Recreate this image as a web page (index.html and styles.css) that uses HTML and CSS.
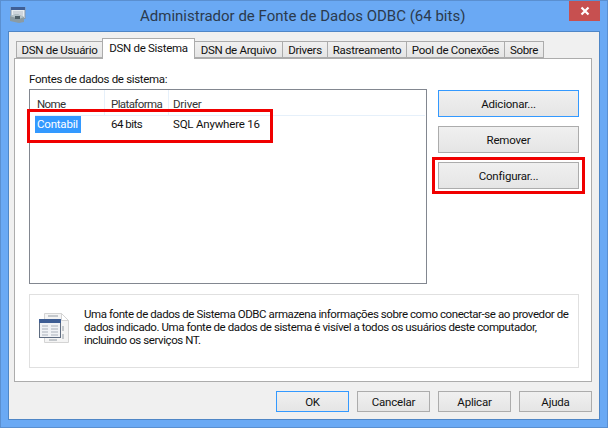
FILE: index.html
```html
<!DOCTYPE html>
<html lang="pt">
<head>
    <meta charset="UTF-8">
    <title>Administrador de Fonte de Dados ODBC (64 bits)</title>
    <link rel="stylesheet" href="styles.css">
</head>
<body>
    <div class="window">
        <div class="titlebar">
            <svg class="app-icon" width="16" height="16" viewBox="0 0 16 16">
                <rect x="1" y="0.5" width="14" height="11" fill="#e8eef2" stroke="#8a97a6"/>
                <rect x="1" y="0" width="14" height="3" fill="#3f5f96"/>
                <path d="M3 5h10M3 7h10M3 9h10" stroke="#b4bcc6"/>
                <path d="M0 9l7-2 7 3v5l-5 1-9-2z" fill="#8b9ba3"/>
                <path d="M0 9l7-2 7 3-5 2z" fill="#b6c4ca"/>
                <rect x="5" y="9" width="5" height="3" fill="#4f5f68"/>
            </svg>
            <div class="title">Administrador de Fonte de Dados ODBC (64 bits)</div>
            <div class="close">
                <svg width="10" height="10" viewBox="0 0 10 10"><path d="M1.5 1.5l7 7M8.5 1.5l-7 7" stroke="#fff" stroke-width="2.2"/></svg>
            </div>
        </div>
        <div class="client">
            <div class="tabs">
                <div class="tab tab-1">DSN de Usuário</div>
                <div class="tab tab-2 active">DSN de Sistema</div>
                <div class="tab tab-3">DSN de Arquivo</div>
                <div class="tab tab-4">Drivers</div>
                <div class="tab tab-5">Rastreamento</div>
                <div class="tab tab-6">Pool de Conexões</div>
                <div class="tab tab-7">Sobre</div>
            </div>
            <div class="panel">
                <div class="panel-main">
                    <div class="list-side">
                        <div class="list-label">Fontes de dados de sistema:</div>
                        <div class="list">
                            <div class="list-head">
                                <div class="col col-name">Nome</div>
                                <div class="col col-plat">Plataforma</div>
                                <div class="col col-driver">Driver</div>
                            </div>
                            <div class="list-row">
                                <div class="col col-name"><span class="selected">Contabil</span></div>
                                <div class="col col-plat">64 bits</div>
                                <div class="col col-driver">SQL Anywhere 16</div>
                            </div>
                        </div>
                    </div>
                    <div class="side-buttons">
                        <div class="btn btn-default">Adicionar...</div>
                        <div class="btn">Remover</div>
                        <div class="btn">Configurar...</div>
                    </div>
                </div>
                <div class="info">
                    <svg class="info-icon" width="32" height="32" viewBox="0 0 32 32">
                        <path d="M5.5 1.5h17l7 7v22h-24z" fill="#f4f4f4" stroke="#d4d4d4"/>
                        <path d="M22.5 1.5v7h7z" fill="#fff" stroke="#d4d4d4"/>
                        <path d="M9 4h10M24 14v5M24 22v5M10 28h8" stroke="#c4c8cc" stroke-width="2"/>
                        <rect x="0.5" y="7.5" width="21" height="18" fill="#f0f2f5" stroke="#5d6b80"/>
                        <rect x="0" y="7" width="22" height="4" fill="#3d5d94"/>
                        <path d="M3 14h6M12 14h7M3 17h6M12 17h7M3 20h6M12 20h7M3 23h6M12 23h7" stroke="#a9b0ba"/>
                    </svg>
                    <p class="info-text">Uma fonte de dados de Sistema ODBC armazena informações sobre como conectar-se ao provedor de<br>dados indicado. Uma fonte de dados de sistema é visível a todos os usuários deste computador,<br>incluindo os serviços NT.</p>
                </div>
            </div>
            <div class="footer">
                <div class="btn btn-small btn-default">OK</div>
                <div class="btn btn-small">Cancelar</div>
                <div class="btn btn-small">Aplicar</div>
                <div class="btn btn-small">Ajuda</div>
            </div>
        </div>
        <div class="mark mark-row"></div>
        <div class="mark mark-btn"></div>
    </div>
</body>
</html>
```

FILE: styles.css
```css
* {
    margin: 0;
    padding: 0;
    box-sizing: border-box;
}

body {
    width: 608px;
    height: 428px;
    overflow: hidden;
    font-family: 'Roboto', sans-serif;
    font-size: 11.5px;
    letter-spacing: -0.2px;
    color: #111;
}

.window {
    position: relative;
    width: 608px;
    height: 428px;
    background: #6aa9f4;
    border: 1px solid #5a8fd0;
    padding: 0 7px 7px;
    display: flex;
    flex-direction: column;
}

/* Title bar */
.titlebar {
    height: 30px;
    display: flex;
    align-items: flex-start;
    flex-shrink: 0;
}

.app-icon {
    margin-top: 6px;
    margin-left: 2px;
}

.title {
    flex: 1;
    padding-left: 114px;
    padding-top: 4px;
    font-size: 15px;
    letter-spacing: 0;
    line-height: 22px;
    color: #2b3a4d;
}

.close {
    width: 31px;
    height: 20px;
    background: #c75050;
    display: flex;
    align-items: center;
    justify-content: center;
}

.client {
    flex: 1;
    background: #f0f0f0;
    border: 1px solid #4f86c6;
    padding: 6px 8px 7px 5px;
    display: flex;
    flex-direction: column;
}

/* Tabs */
.tabs {
    display: flex;
    height: 21px;
    padding-left: 2px;
    align-items: flex-end;
    position: relative;
    z-index: 1;
    margin-bottom: -1px;
    letter-spacing: -0.3px;
}

.tab {
    height: 17px;
    margin-bottom: 1px;
    border: 1px solid #acacac;
    border-left-width: 0;
    background: linear-gradient(#f0f0f0, #e5e5e5);
    display: flex;
    align-items: center;
    justify-content: center;
    white-space: nowrap;
    line-height: 16px;
}

.tab-1 { width: 87px; border-left-width: 1px; }
.tab-2 { width: 93px; }
.tab-3 { width: 88px; }
.tab-4 { width: 45px; }
.tab-5 { width: 79px; }
.tab-6 { width: 98px; }
.tab-7 { width: 39px; }

.tab.active {
    height: 21px;
    margin-bottom: 0;
    background: #fff;
    border-bottom: 0;
    border-left-width: 1px;
    margin-left: -1px;
    padding-bottom: 2px;
}

/* Panel */
.panel {
    height: 324px;
    width: 578px;
    background: #fff;
    border: 1px solid #acacac;
    padding: 12px 12px 13px 14px;
    display: flex;
    flex-direction: column;
}

.panel-main {
    flex: 1;
    display: flex;
    justify-content: space-between;
}

.list-side {
    width: 398px;
}

.list-label {
    height: 18px;
    line-height: 16px;
    letter-spacing: -0.32px;
}

.list {
    height: 195px;
    border: 1px solid #828790;
}

.list-head {
    display: flex;
    height: 25px;
    line-height: 16px;
    color: #333;
    letter-spacing: -0.6px;
}

.list-row {
    display: flex;
    height: 19px;
    line-height: 16px;
    margin: 0 1px 0 5px;
    border-top: 1px solid #e6f0fa;
}

.col {
    white-space: nowrap;
}

.list-head .col {
    padding-top: 6px;
    height: 25px;
}

.list-head .col-name { width: 75px; padding-left: 7px; }
.list-head .col-plat { width: 64px; padding-left: 6px; }
.list-head .col-driver { padding-left: 4px; letter-spacing: -0.2px; }

.list-head .col-name,
.list-head .col-plat {
    border-right: 1px solid #e6f0fa;
}

.list-row .col-name { width: 70px; }
.list-row .col-plat { width: 64px; padding-left: 6px; letter-spacing: -0.5px; }
.list-row .col-driver { padding-left: 4px; }

.selected {
    display: inline-block;
    width: 46px;
    height: 17px;
    padding-left: 2px;
    background: #3399ff;
    color: #fff;
}

.side-buttons {
    width: 141px;
    padding-top: 19px;
    display: flex;
    flex-direction: column;
    gap: 9px;
}

.btn {
    height: 27px;
    border: 1px solid #acacac;
    background: linear-gradient(#f0f0f0, #e5e5e5);
    display: flex;
    align-items: center;
    justify-content: center;
    line-height: 16px;
}

.btn-default {
    border-color: #3399ff;
}

/* Info box */
.info {
    height: 74px;
    width: 550px;
    border: 1px solid #e0e0e0;
    padding: 13px 0 0 9px;
    display: flex;
}

.info-icon {
    flex-shrink: 0;
    margin-top: 4px;
}

.info-text {
    margin-left: 13px;
    line-height: 13px;
    letter-spacing: -0.42px;
    white-space: nowrap;
}

/* Footer */
.footer {
    display: flex;
    justify-content: flex-end;
    gap: 8px;
    margin-top: 9px;
    margin-right: -1px;
}

.btn-small {
    width: 73px;
    height: 21px;
}

/* Red highlight rectangles */
.mark {
    position: absolute;
    border: 3px solid #f00000;
}

.mark-row {
    left: 26px;
    top: 108px;
    width: 246px;
    height: 34px;
}

.mark-btn {
    left: 431px;
    top: 156px;
    width: 153px;
    height: 37px;
}
```
